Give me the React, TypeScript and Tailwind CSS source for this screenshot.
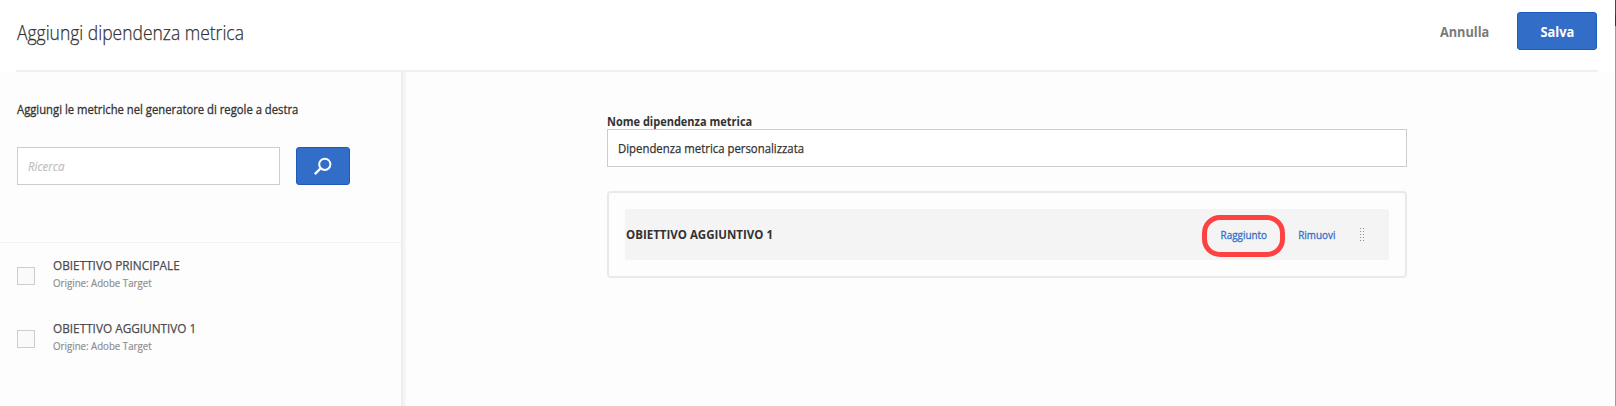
import React from "react";

const metrics = [
  { name: "OBIETTIVO PRINCIPALE", origin: "Adobe Target" },
  { name: "OBIETTIVO AGGIUNTIVO 1", origin: "Adobe Target" },
];

function SearchIcon() {
  return (
    <svg width="20" height="20" viewBox="0 0 20 20" fill="none" stroke="#fff" className="block">
      <circle cx="11.8" cy="8.3" r="5.6" strokeWidth="2" />
      <path d="M8 12 1.8 18.2" strokeWidth="2.4" />
    </svg>
  );
}

function DragHandle() {
  return (
    <div className="-mt-px ml-[25px] mr-[25px] grid w-[4px] grid-cols-2 gap-[2px]">
      {Array.from({ length: 10 }, (_, i) => (
        <span key={i} className="size-px bg-[#8e8e8e]" />
      ))}
    </div>
  );
}

export default function App() {
  return (
    <div className="flex h-[406px] w-[1616px] overflow-hidden bg-[#fdfdfd] font-['Open_Sans',sans-serif] text-[#323232]">
      <div className="flex w-[1615px] flex-col">
        <header className="flex h-[72px] shrink-0 flex-col bg-white pl-4 pr-[17px]">
          <div className="flex h-[70px] items-start justify-between pl-px pr-px">
            <h1 className="mt-[18px] origin-left scale-x-[0.874] whitespace-nowrap text-[20px] font-light leading-[30px] [-webkit-text-stroke:0.25px]">Aggiungi dipendenza metrica</h1>
            <div className="mt-3 flex items-start gap-7">
              <button className="origin-right scale-x-[0.91] pt-px text-[14px] font-bold leading-[38px] text-[#7a7a7a]">Annulla</button>
              <button className="h-[38px] w-20 rounded-[3px] border border-[#1e5cbc] bg-[#326ec8] text-[14px] font-bold text-white">
                <span className="inline-block scale-x-[0.92] pt-px">Salva</span>
              </button>
            </div>
          </div>
          <div className="h-[2px] bg-[#f0f0f0]" />
        </header>
        <div className="flex flex-1">
          <aside className="w-[401px]">
            <p className="ml-[17px] origin-left scale-x-[0.867] whitespace-nowrap pt-[27px] text-[13px] leading-[20px] [-webkit-text-stroke:0.3px]">Aggiungi le metriche nel generatore di regole a destra</p>
            <div className="mt-[28px] flex gap-4 pl-[17px]">
              <div className="flex h-[38px] w-[263px] items-center border border-[#cdcdcd] bg-white px-[10px] pt-[2px]">
                <span className="inline-block origin-left scale-x-[0.88] text-[13px] italic text-[#c0c0c0] [-webkit-text-stroke:0.2px]">Ricerca</span>
              </div>
              <button className="flex h-[38px] w-[54px] items-center justify-center rounded-[3px] border border-[#1e5cbc] bg-[#326ec8]"><SearchIcon /></button>
            </div>
            <div className="mt-[57px] h-px bg-[#f3f3f3]" />
            <ul className="pt-[13px]">
              {metrics.map((metric) => (
                <li key={metric.name} className="flex h-[63px] pl-[17px]">
                  <span className="mt-[11px] size-[18px] border border-[#cdcdcd] bg-[#fafafa]" />
                  <div className="ml-[18px] whitespace-nowrap">
                    <div className="origin-left scale-x-[0.907] text-[13px] leading-[18px] text-[#4b4b4b] [-webkit-text-stroke:0.25px]">{metric.name}</div>
                    <div className="origin-left scale-x-[0.88] text-[11px] leading-[17px] text-[#8e8e8e] [-webkit-text-stroke:0.2px]">Origine: {metric.origin}</div>
                  </div>
                </li>
              ))}
            </ul>
          </aside>
          <div className="w-[6px] bg-linear-to-r from-[#ebebeb] to-[#fdfdfd]" />
          <main className="pl-[200px] pt-[41px]">
            <div className="h-4 w-fit origin-left scale-x-[0.846] whitespace-nowrap text-[13px] font-bold leading-4">Nome dipendenza metrica</div>
            <div className="flex h-[38px] w-[800px] items-center border border-[#cdcdcd] bg-white px-[10px] pt-[2px]">
              <span className="inline-block origin-left scale-x-[0.874] whitespace-nowrap text-[13px] [-webkit-text-stroke:0.25px]">Dipendenza metrica personalizzata</span>
            </div>
            <section className="mt-6 h-[87px] w-[800px] rounded-[4px] border-2 border-[#e9e9e9] p-4">
              <div className="flex h-[51px] items-center rounded-[3px] bg-[#f4f4f4] pl-px">
                <span className="origin-left scale-x-[0.885] text-[13px] font-bold">OBIETTIVO AGGIUNTIVO 1</span>
                <button className="ml-auto mt-[2px] flex h-[42px] w-[83px] items-center justify-center rounded-[18px] border-[5px] border-[#fe4141] pl-px text-[11px] text-[#326ec8]">
                  <span className="scale-x-[0.9] [-webkit-text-stroke:0.3px]">Raggiunto</span>
                </button>
                <button className="ml-[9px] mt-[2px] origin-right scale-x-[0.9] text-[11px] text-[#326ec8] [-webkit-text-stroke:0.3px]">Rimuovi</button>
                <DragHandle />
              </div>
            </section>
          </main>
        </div>
      </div>
      <div className="flex w-px flex-col">
        <div className="h-[15px] bg-[#1c4d99]" />
        <div className="h-[11px] bg-[#333]" />
        <div className="flex-1 bg-[#9c9c9c]" />
      </div>
    </div>
  );
}
